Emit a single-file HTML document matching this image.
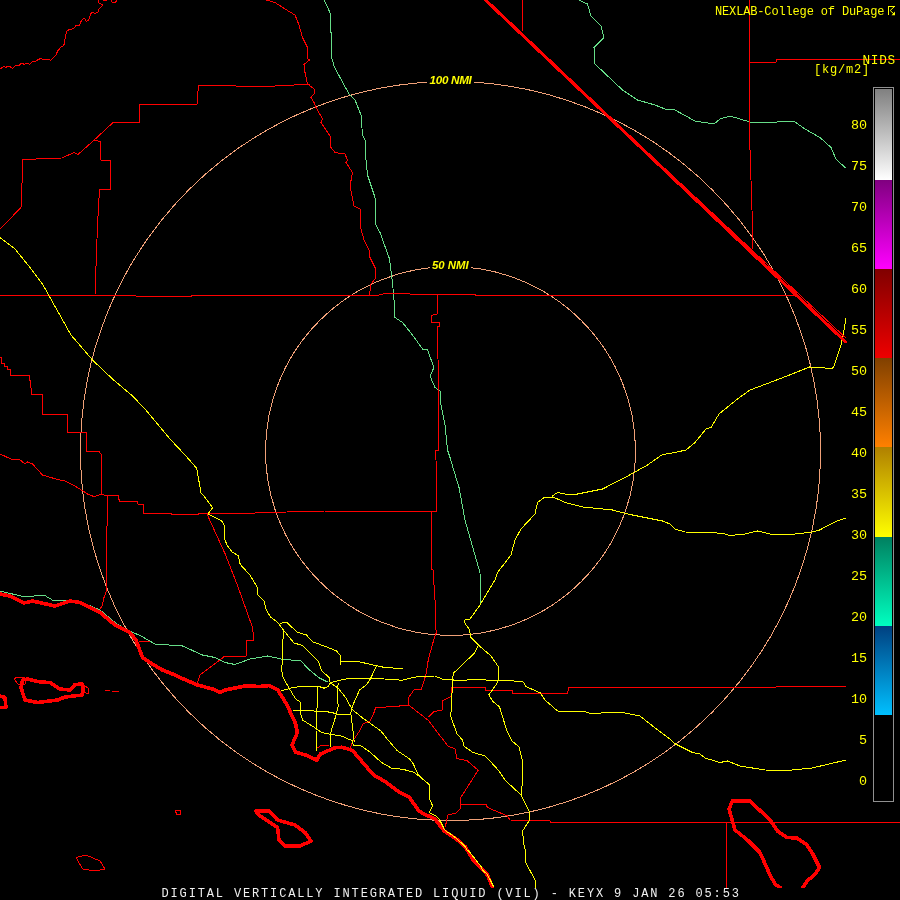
<!DOCTYPE html>
<html><head><meta charset="utf-8"><style>
html,body{margin:0;padding:0;background:#000;}
svg{display:block;} text{will-change:transform;}
</style></head><body>
<svg width="900" height="900" viewBox="0 0 900 900">
<defs><linearGradient id="g0" x1="0" y1="0" x2="0" y2="1"><stop offset="0" stop-color="#808080"/><stop offset="1" stop-color="#ffffff"/></linearGradient><linearGradient id="g1" x1="0" y1="0" x2="0" y2="1"><stop offset="0" stop-color="#800080"/><stop offset="1" stop-color="#ff00ff"/></linearGradient><linearGradient id="g2" x1="0" y1="0" x2="0" y2="1"><stop offset="0" stop-color="#800000"/><stop offset="1" stop-color="#ee0000"/></linearGradient><linearGradient id="g3" x1="0" y1="0" x2="0" y2="1"><stop offset="0" stop-color="#804000"/><stop offset="1" stop-color="#ff8000"/></linearGradient><linearGradient id="g4" x1="0" y1="0" x2="0" y2="1"><stop offset="0" stop-color="#b08000"/><stop offset="1" stop-color="#ffff00"/></linearGradient><linearGradient id="g5" x1="0" y1="0" x2="0" y2="1"><stop offset="0" stop-color="#008060"/><stop offset="1" stop-color="#00ffc0"/></linearGradient><linearGradient id="g6" x1="0" y1="0" x2="0" y2="1"><stop offset="0" stop-color="#004080"/><stop offset="1" stop-color="#00c0ff"/></linearGradient></defs>
<rect width="900" height="900" fill="#000"/>
<g fill="none" stroke-linejoin="round" stroke-linecap="round" shape-rendering="crispEdges">
<g stroke="#f0a078" stroke-width="1">
<ellipse cx="450.5" cy="451" rx="370" ry="369.5"/>
<ellipse cx="450.5" cy="451" rx="185" ry="184.5"/>
</g>
<g stroke="#66dd88" stroke-width="1">
<polyline points="324,0 330,12.5 331,32.5 331,55 334,66 340,77.5 349,94 355,100 361,115 362.5,135 365,140 366,160 367.5,175 375,197.5 376,225 380,232.5 389,257.5 390,262.5 392.5,282.5 394,300 395,317.5 402.5,322.5 412.5,335 422.5,349 427.5,350 434,367.5 430,376 435,387.5 440,391 441,405 445,425 447.5,450 450,457.5 459,487.5 465,520 475,555 480,572.5 480.5,605"/>
<polyline points="579,0 587.5,4 591,16 601,26 604,37.5 594,47.5 595,64 622.5,90 637.5,100 655,105 665,109 675,110 695,121 714,124 720,119 730,116 750,122 770,123 785,121 795,122 805,129 820,137.5 831,147.5 836,159 845,167.5"/>
<polyline points="0,591 25,597 44,595 54,601 77.5,600.5 100,610 115,622.5 125,629 140,635.5 155,644 182.5,646 202.5,655 215,657.5 225,662.5 235,664.5 250,659 267.5,656 283.1,659.4 300.9,660.7 308,668.7 318.7,677.6 327.6,682"/>
</g>
<g stroke="#ff0000" stroke-width="1">
<polyline points="0,68.5 2.3,67.7 4.3,66.2 5.8,67.7 7.4,66.4 9.7,66.4 12.4,68.5 14.4,66.6 16.3,65.4 19.4,65.4 20.6,63.4 22.9,63.4 24.1,64.5 26.1,63.4 28.4,63.4 29.6,64.6 32.3,61.5 35.4,61.5 38.1,59.6 40.8,58.4 42.4,59.4 48.6,59.4 50.6,60.3 51.7,59.6 56,54.9 57.6,51 59.5,49.1 61.1,46.7 63,46.3 64.6,43.6 64.9,40.1 65.7,34.7 67,31.1 68.6,29.9 70.9,29.4 73.6,28.4 76.3,25.3 79.4,25.3 81.4,20.6 82.9,19.1 84.5,18.5 86.4,21.4 88.8,19.8 90.7,13.6 92.7,12.3 94.6,13.6 98.1,12.1 98.5,9.3 102.4,5.8 102,4.3 98.9,3.1 98.5,0"/>
<polyline points="103.2,0.5 106.7,0.5"/>
<polyline points="111.3,0 112.1,2.3 115.6,2.3 116.8,0"/>
<polyline points="310,84 294,85 275,86 236,86 225,85.5 198.3,85.3 197.4,104 139.1,104 139.1,122.3 113.3,122.3 93.8,140.4 77.8,154.7 74.2,152.5 61.8,158 23,159.5 21,207.5 4,225 0,229"/>
<polyline points="93.8,140.4 100.5,141.3 100.5,160 110.5,160 110.5,189 99.5,189 97.5,225 95,295"/>
<polyline points="266,0 275,2.5 285,9 295,15 299,25 302.5,37.5 307.5,47.5 308,59 309.5,60 304,64.5 305,72.5 307.5,84 314,89 315,92.5 311,97.5 314,102.5 316,107.5 322.5,119 321,122.5 330,136 331,147.5 335,152.5 345,154 347.5,160 346,162.5 352.5,172.5 350,186 354,206 360,209 361,215 360,225 364,240 369,250 370,257.5 375,267.5 375,279 371,284 369.5,295"/>
<polyline points="0,295.5 136,295.5 136,296.75 191,296.75 191,295.5 375,296 385,293.5 410,294 437.5,295 475,294.5 475,295.5 795,295.5"/>
<polyline points="437,295 437,314 431,315.5 431,322.5 439.5,322.5 439.5,326 437,326 437.5,340 438.5,378 439,450 435.6,450 436,460 437,511"/>
<polyline points="437,511 325,511 267.5,512.5 250,513.2 199.3,513.2 198.4,514.3 171.8,514.3 170.9,513.2 143.3,513.2 143.3,504.4 138,504.4 137.1,501.3 119.3,501.3 118.4,495.5 106,495.5 101.6,494.2 93.6,496.9 91.8,495.5 87.5,494 75,486 65,481 57.5,479.5 42.5,475 32.5,464 27.5,462 25,464 19,459 11,459 0,454"/>
<polyline points="431,511 431,569 433,570 435,600 436,630 436.4,632.4 433.8,639.6 428.4,659.1 425.8,675.1 421.3,689.3 414.2,689.7 408,698.2 408.9,705.3 428.4,720.4 448,746.2 455.1,748.9 456.9,758.7 466.7,760.4 478.2,770.2 460,798.7 460.7,808 456,813.3 448,814.7 445.3,826.7"/>
<polyline points="408.9,705.3 375.6,707.8 373.8,713.1 370.2,721.1 363.1,723.8 359.6,730.9 352.4,741.6 350,749"/>
<polyline points="428.4,716.9 433.8,711.6 442.7,709.8 442.7,700.9 451.6,696.1 451.6,687.6 485.3,687.2 485.3,690.6 512.9,690.6 512.9,693.2 567.5,693 569,687 675,687 776,687 776,686 846,686"/>
<polyline points="207.3,514.7 225.1,553.8 237.6,585.8 252.5,627.5 254,640 247,640.5 246,656 225,656 200,675 197.5,682.5"/>
<polyline points="107.2,495.5 106.9,545.8 106,592.5 104,597.5 102.5,605 100,609"/>
<polyline points="0,357.3 1.3,357.3 1.3,363.3 4.7,363.3 4.7,366.7 7.3,366.7 7.3,369.3 10.4,369.3 10.4,375.3 29.3,375.3 29.3,380 30.7,380 31.3,394.4 42.4,394.4 42.4,414.3 67.3,414.3 67.3,432 86.7,432 86.7,451.3 98.7,451.3 101.3,454.4 101.6,494.2"/>
<polyline points="522.5,0 522,33"/>
<polyline points="749,0 749.5,61 750,150 752.5,225 752.5,249"/>
<polyline points="749.5,62 776,62 776,59.5 900,59.5"/>
<polyline points="460.7,804.7 486,804.5 487.5,807.5 507.5,816 510,820 550,820.5 550,822.5 900,822.5"/>
<polyline points="726,822.5 726,887.5"/>
<polyline points="139,641 150,642"/>
<polyline points="317,748 322,745 329,746"/>
<polyline points="105,690 110,691"/>
<polyline points="112,692 116,691 119,692"/>
<polygon points="14,679 17,677 25,678 25,684 18,684"/>
<polygon points="84,685 89,689 88,694 84,692"/>
<polygon points="175,810 180,810 181,814 177,815"/>
<polygon points="76,857.5 86,855 100,861 105,869 95,871 82.5,869"/>
</g>
<g stroke="#ffff00" stroke-width="1">
<polyline points="0,237.5 15,249 30,267.5 42.5,284 50,297.5 71,335 92.5,360 112.5,379 132.5,396 145,409 170.9,440 186,456 196.7,468.4 201.1,493.3 203.8,496 212.7,507.6 208.2,513.8 214.4,517.3 221.6,520.9 224.2,525.3 224.2,537.8 226.9,544.9 232.2,552 238.4,555.6 240.2,564.4 250,575.1 257.5,587.5 257,594 264,601 266.2,610 270.7,617.1 277.8,622.4 283.1,629.6 293.8,642.9 302.7,645.6 311.6,654.4 318.7,661.6 321.3,670.4 329.3,677.6 330.2,682.9 338.2,688.2 345.3,697.1 352.4,709.6 363.1,718.4 380.9,730.9 388,740 397.3,750.7 409.3,758.7 413.3,764 417.3,772.7 420,776.7 429.3,784.7 430,800 432.7,806 429.3,812.7 436,816 440,820 445.3,830.7 464,845.3 474.7,860 486,874 491,887"/>
<polyline points="280.4,623.3 286.7,622.4 297.3,632.2 306.2,634.9 313.3,642 327.6,647.3 336.4,650.9 340.9,656.2 340.9,664.2"/>
<polyline points="340.9,661.6 359.6,661.9 373.8,665.1 386.2,667.8 402.2,668.3"/>
<polyline points="283.1,629.6 282.8,661.6 281.3,668.7 283.1,677.6 290.2,690 295.6,698.9 300.9,702.4 300.9,714.9 302.7,720.2 311.6,725.6 322.2,732.7 331.1,734.4 341.8,736.2 352.4,740.7 353.3,745.1 361.3,746 370.2,752.2 380.9,762 391.6,768.2 402.7,769.3 413.3,772 420,776.7"/>
<polyline points="278.7,691.8 290.2,688.2 300.9,686.4 318.7,686.4 324,688.2 328.4,686.4 330.2,682.9 340,680.2 348.9,678.4 366.7,678.4 384.4,679 402.2,680.2 417.8,676.5 434.7,676 442.7,679.2 458.7,680.4 474.7,679.6 497.8,680.4 522.7,681.3 526.2,686.7 540.4,692.9 544.9,700 551.1,705.3 557.5,711 582.5,711 592.5,714 610,712 622.5,712.5 640,716 650,724 670,739 675,743.75 692.5,752.5 700,754 705,758 720,762.5 727.5,761 740,766 765,770 787,770.5 812,768 846,760"/>
<polyline points="376.4,666 370.2,679.3 366.7,684.7 359.6,690 352.4,706 350.7,713.1 352.4,725.6 354.2,741.6"/>
<polyline points="317.8,686.4 316.9,711.3 316,730.9 316.9,750.4"/>
<polyline points="338.2,682.9 337.3,695.3 338.2,706 335.6,716.7 331.1,730.9 330.2,746.9"/>
<polyline points="293.8,710.4 304.4,710.4 318.7,711.3 331.1,712.2 336.4,714 350.7,714"/>
<polyline points="465,620 464.5,622.5 469,629 471.1,637.8 478.2,644.9 490.7,655.6 498.7,667.1 498.7,679.6 496,684.9 488.9,694.7 492.4,700.9 499.6,707.1 506.7,730.2 512,740.9 519.1,747.1 522.7,762.2 522.7,780 521,795 529,811 529,821 522.5,831 524,845 526,852.5 525,861 535,880 536,887.5"/>
<polyline points="465,620 470,619 480,605 495,580 497.5,572.5 511,555 515,540 521,529 535,514 537.5,502.5 544,497.5 552.5,497 560,500 565,502.5 582.5,507 612.5,510 630,514.5 647.5,518 662.5,521 670,524 675,529 685,532 712.5,532.5 725,534 730,535.5 745,534 757.5,531 770,534 787,535 812,532 819.5,530 837,521 846,518"/>
<polyline points="552.5,496 557.5,492.5 565,494 575,494.5 587.5,492 602.5,489 625,477.5 647.5,465 662.5,454.5 675,452.5 686,450 695,442.5 706,429 711,427.5 719,414 737.5,399 750,390 770,382.5 787,376 809.5,367 824.5,368 832,369 834.5,365 841,345 844.5,327.5 846,318"/>
<polyline points="478.2,645.8 474.7,652.9 453.3,673.3 452.4,682.2 451.6,705.3 450.7,716 456.9,733.8 462.5,740 464,746.2 472.9,752.4 485.3,756 496,767.6 500,772.5 504.9,780 521,795"/>
</g>
<g stroke="#ff0000" stroke-width="3.6">
<polyline points="0,594 10,596 24,603 32.5,601 55,606 70,601 80,602.5 100,612.5 115,625 130,632.5 136,640 142.5,657.5 150,662.5 162.5,670 175,675 180,677.5 197.5,685 212.5,689 220,692.5 225,690 245,686 260,686.4 268.9,685.6 277.8,690 286.7,704.2 295.6,723.8 297.3,732.7 292,745.1 295.6,752.2 308,755.8 316.9,760.2 320.4,754 334.7,747.8 341.8,747.2 352.4,750.4 363.1,762.9 373.3,774.7 386.7,782.7 400,792.7 409.3,797.3 418.7,810.7 424,814 434.7,818.7 444,830.7 456,838.7 465.3,846.7 473.3,860 487.5,875 492.5,887.5"/>
<polyline points="780,887.5 775,884 770,875 760,852.5 747.5,840 735,830 729,809 732.5,801 750,801 770,820 777.5,831 787,837.5 797,838 807,845 812,852.5 819.5,867.5 814.5,875 808,880 803,887.5"/>
<polyline points="0,696 5,697.5 6,707.5 0,707.5"/>
<polygon points="22.5,680 27.5,679 40,682 50,682.5 60,689 70,690 75,684.5 82.5,684 82.5,695 65,697 57.5,700 37.5,702.5 25,700 21,687.5"/>
<polygon points="256,811 269,811 277.5,820 295,825 305,832.5 311,841 300,846 285,846 279,840 277.5,827.5 270,822.5 257.5,814"/>
<polyline points="485.5,0 845.5,341.8" stroke-width="3.2"/>
<polyline points="600,107.8 845.6,337.8" stroke-width="1"/>
</g>
<g stroke="#ffff00" stroke-width="1">
<polyline points="440,821.5 444.7,830 447.8,832.4 451.7,834.8 455.6,837.9 461.8,843.3 465.7,847.2 466.4,849.5 469.5,851.9 475,858.9 481.2,866.7 482.8,870.5 486.7,873.7 489.8,879.1 493.7,886.9"/>
</g>
</g>
<rect x="427" y="73" width="47" height="13" fill="#000"/>
<rect x="430" y="259" width="41" height="13" fill="#000"/>
<rect x="0" y="888" width="900" height="12" fill="#000"/>
<g font-family="Liberation Sans, sans-serif" font-weight="bold" font-style="italic" font-size="11.4" fill="#ffff00">
<text x="429.5" y="84" font-size="11.7" letter-spacing="-0.3">100 NMI</text>
<text x="432" y="269" font-size="11.4">50 NMI</text>
</g>
<g>
<rect x="873.5" y="87.5" width="20" height="714" fill="none" stroke="#909090" stroke-width="1"/>
<rect x="875" y="89" width="17" height="91" fill="url(#g0)"/><rect x="875" y="180" width="17" height="89" fill="url(#g1)"/><rect x="875" y="269" width="17" height="89" fill="url(#g2)"/><rect x="875" y="358" width="17" height="89" fill="url(#g3)"/><rect x="875" y="447" width="17" height="90" fill="url(#g4)"/><rect x="875" y="537" width="17" height="89" fill="url(#g5)"/><rect x="875" y="626" width="17" height="89" fill="url(#g6)"/>
</g>
<g font-family="Liberation Mono, monospace" fill="#ffff00" font-size="12">
<text x="867" y="129" text-anchor="end" font-size="13.4">80</text><text x="867" y="170" text-anchor="end" font-size="13.4">75</text><text x="867" y="211" text-anchor="end" font-size="13.4">70</text><text x="867" y="252" text-anchor="end" font-size="13.4">65</text><text x="867" y="293" text-anchor="end" font-size="13.4">60</text><text x="867" y="334" text-anchor="end" font-size="13.4">55</text><text x="867" y="375" text-anchor="end" font-size="13.4">50</text><text x="867" y="416" text-anchor="end" font-size="13.4">45</text><text x="867" y="457" text-anchor="end" font-size="13.4">40</text><text x="867" y="498" text-anchor="end" font-size="13.4">35</text><text x="867" y="539" text-anchor="end" font-size="13.4">30</text><text x="867" y="580" text-anchor="end" font-size="13.4">25</text><text x="867" y="621" text-anchor="end" font-size="13.4">20</text><text x="867" y="662" text-anchor="end" font-size="13.4">15</text><text x="867" y="703" text-anchor="end" font-size="13.4">10</text><text x="867" y="744" text-anchor="end" font-size="13.4">5</text><text x="867" y="785" text-anchor="end" font-size="13.4">0</text>
<text x="715" y="15" font-size="12" letter-spacing="-0.15">NEXLAB-College of DuPage</text>
<text x="862.5" y="63.8" font-size="12.7" letter-spacing="0.73">NIDS</text>
<text x="814" y="73.2" font-size="12" letter-spacing="0.78">[kg/m2]</text>
</g>
<g stroke="#ffff00" stroke-width="1" fill="none">
<path d="M888.5 6 V15 M888 6.5 H895 M894.5 6.5 L890.2 10.5 L894.5 14.5"/><path d="M895 11.5 V15.3 H891.5 Z" fill="#ffff00" stroke="none"/>
</g>
<text x="161.5" y="896.8" font-family="Liberation Mono, monospace" font-size="12" letter-spacing="1.85" fill="#f0f0f0">DIGITAL VERTICALLY INTEGRATED LIQUID (VIL) - KEYX 9 JAN 26 05:53</text>
</svg>
</body></html>
